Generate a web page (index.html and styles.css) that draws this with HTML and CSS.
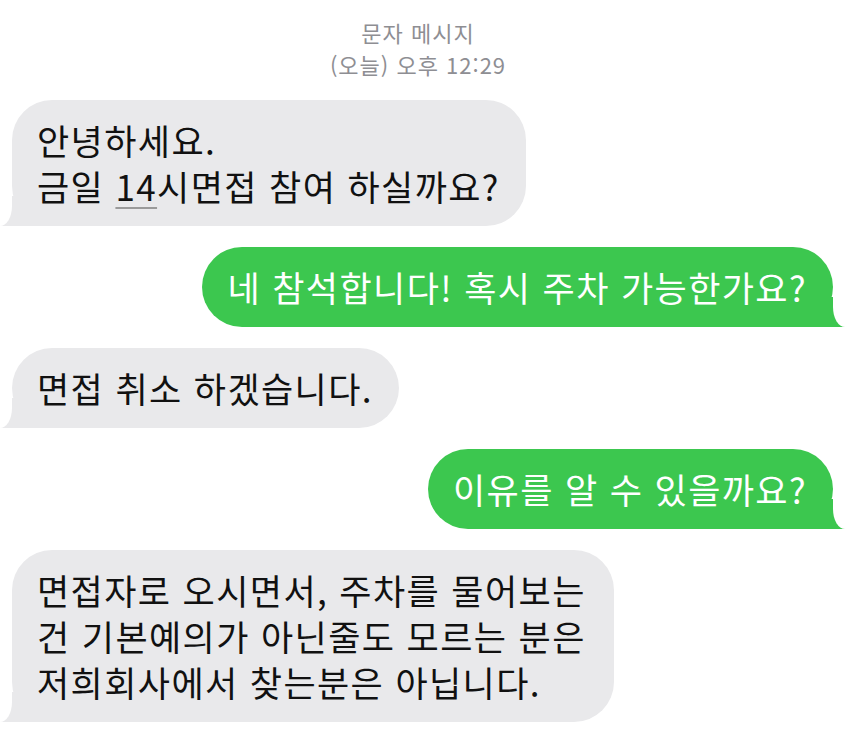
FILE: index.html
```html
<!DOCTYPE html>
<html lang="ko">
<head>
  <meta charset="UTF-8">
  <meta name="viewport" content="width=device-width, initial-scale=1.0">
  <title>문자 메시지</title>
  <link rel="stylesheet" href="styles.css">
</head>
<body>
  <header class="thread-head">문자 메시지<br>(오늘) 오후 12:29</header>

  <main class="thread">
    <div class="bubble them">안녕하세요.<br>금일 <span class="detected">14</span>시면접 참여 하실까요?</div>
    <div class="bubble me">네 참석합니다! 혹시 주차 가능한가요?</div>
    <div class="bubble them">면접 취소 하겠습니다.</div>
    <div class="bubble me">이유를 알 수 있을까요?</div>
    <div class="bubble them wrapped">면접자로 오시면서, 주차를 물어보는<br>건 기본예의가 아닌줄도 모르는 분은<br>저희회사에서 찾는분은 아닙니다.</div>
  </main>
</body>
</html>
```

FILE: styles.css
```css
body {
  margin: 0;
  background: #ffffff;
  font-family: "Noto Sans CJK KR", "Noto Sans", sans-serif;
}

.thread-head {
  padding: 16px 18px 0 0;
  text-align: center;
  color: #8e8e93;
  font-size: 22px;
  line-height: 32px;
  letter-spacing: 1px;
}

.thread {
  display: flex;
  flex-direction: column;
  gap: 21px;
  padding: 20px 21px 0 12px;
}

.bubble {
  position: relative;
  z-index: 0;
  padding: 17px 26px 17px 25px;
  border-radius: 40px;
  font-size: 35px;
  line-height: 46px;
  letter-spacing: 1.4px;
  white-space: nowrap;
}
.bubble::before,
.bubble::after {
  content: "";
  position: absolute;
  z-index: -1;
  bottom: 0;
  height: 30px;
}

.them {
  align-self: flex-start;
  background: #e9e9eb;
  color: #111111;
}
.them::before {
  left: -12px;
  width: 52px;
  background: #e9e9eb;
}
.them::after {
  left: -24px;
  width: 24px;
  background: #ffffff;
  border-bottom-right-radius: 12px 20px;
}
.them.wrapped {
  padding-right: 28px;
}

.me {
  align-self: flex-end;
  background: #3cc74f;
  color: #ffffff;
}
.me::before {
  right: -12px;
  width: 52px;
  background: #3cc74f;
}
.me::after {
  right: -24px;
  width: 24px;
  background: #ffffff;
  border-bottom-left-radius: 12px 20px;
}

.detected {
  text-decoration: underline;
  text-decoration-color: #9a9a9a;
  text-decoration-thickness: 2px;
  text-underline-offset: 6px;
}
```
